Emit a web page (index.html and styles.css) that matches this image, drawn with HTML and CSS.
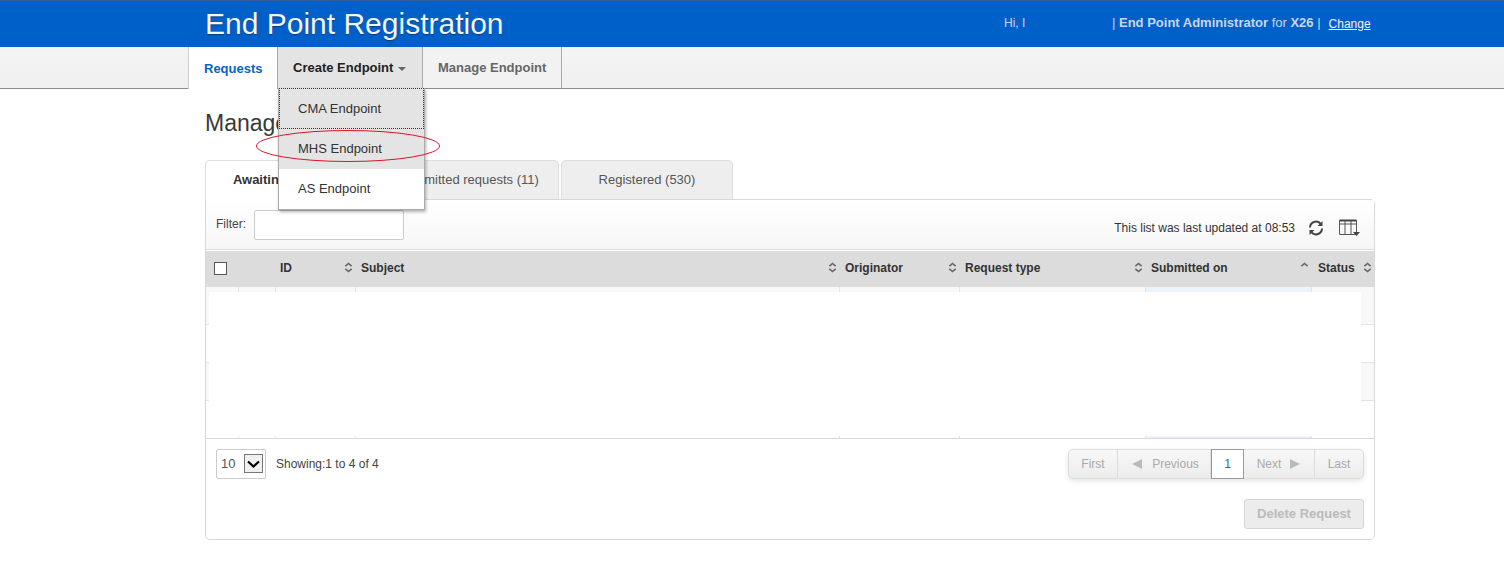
FILE: index.html
```html
<!DOCTYPE html>
<html lang="en">
<head>
    <meta charset="UTF-8">
    <title>End Point Registration</title>
    <link rel="stylesheet" href="styles.css">
</head>
<body>
    <svg class="defs" width="0" height="0">
        <symbol id="sort" viewBox="0 0 10 12">
            <path d="M1.5 4.5 5 1.5l3.500 3M1.500 7.500 5 10.500l3.500-3" fill="none" stroke="#666" stroke-width="1.800"/>
        </symbol>
    </svg>

    <!-- Header -->
    <header class="top-bar">
        <h1>End Point Registration</h1>
        <div class="user-info">
            <span class="greeting">Hi, I</span>
            <span class="role">| <b>End Point Administrator</b> for <b>X26</b> |</span>
            <a href="#">Change</a>
        </div>
    </header>

    <!-- Nav -->
    <nav class="main-nav">
        <a class="nav-item active" href="#">Requests</a>
        <div class="nav-dropdown">
            <a class="nav-item open" href="#">Create Endpoint <i class="caret"></i></a>
            <ul class="dropdown-menu">
                <li class="focused">CMA Endpoint</li>
                <li class="hover">MHS Endpoint</li>
                <li>AS Endpoint</li>
            </ul>
            <svg class="highlight" width="186" height="34" viewBox="0 0 186 34">
                <ellipse cx="93" cy="17" rx="91.500" ry="15.500" fill="none" stroke="#e0142c" stroke-width="1"/>
            </svg>
        </div>
        <a class="nav-item" href="#">Manage Endpoint</a>
    </nav>

    <main class="content">
        <h2>Manage Requests</h2>

        <div class="tabs">
            <a class="tab active" href="#">Awaiting approval (4)</a>
            <a class="tab" href="#">Submitted requests (11)</a>
            <a class="tab" href="#">Registered (530)</a>
        </div>

        <section class="panel">
            <div class="toolbar">
                <label class="filter">Filter: <input type="text"></label>
                <div class="toolbar-right">
                    <span>This list was last updated at 08:53</span>
                    <svg class="refresh" width="16" height="16" viewBox="0 0 16 16">
                        <path d="M2 7.500A6 6 0 0 1 12.500 3.700M14 8.500A6 6 0 0 1 3.500 12.300" fill="none" stroke="#444" stroke-width="2"/>
                        <path d="M14.500 1v5h-5zM1.500 15v-5h5z" fill="#444"/>
                    </svg>
                    <svg class="columns" width="22" height="18" viewBox="0 0 22 18">
                        <path d="M.5 1.500h17v14H.5zM.5 5h17M6 1.500v14M12 1.500v14" fill="none" stroke="#555"/>
                        <path d="M.5 1.500h17" stroke="#444" stroke-width="2"/>
                        <path d="M14 13h7l-3.500 4z" fill="#444"/>
                    </svg>
                </div>
            </div>

            <div class="table-wrap">
                <table>
                    <colgroup>
                        <col class="c-check"><col class="c-flag"><col class="c-id"><col class="c-subject">
                        <col class="c-orig"><col class="c-type"><col class="c-date"><col class="c-status">
                    </colgroup>
                    <thead>
                        <tr>
                            <th><i class="checkbox"></i></th>
                            <th></th>
                            <th class="th-id">ID <svg class="sort"><use href="#sort"/></svg></th>
                            <th>Subject <svg class="sort"><use href="#sort"/></svg></th>
                            <th>Originator <svg class="sort"><use href="#sort"/></svg></th>
                            <th>Request type <svg class="sort"><use href="#sort"/></svg></th>
                            <th>Submitted on
                                <svg class="sort" viewBox="0 0 10 12"><path d="M1.500 4.500 5 1.500l3.500 3" fill="none" stroke="#666" stroke-width="1.800"/></svg>
                            </th>
                            <th class="th-status">Status <svg class="sort"><use href="#sort"/></svg></th>
                        </tr>
                    </thead>
                    <tbody>
                        <tr class="odd"><td></td><td></td><td></td><td></td><td></td><td></td><td class="sorted"></td><td></td></tr>
                        <tr><td></td><td></td><td></td><td></td><td></td><td></td><td class="sorted"></td><td></td></tr>
                        <tr class="odd"><td></td><td></td><td></td><td></td><td></td><td></td><td class="sorted"></td><td></td></tr>
                        <tr><td></td><td></td><td></td><td></td><td></td><td></td><td class="sorted"></td><td></td></tr>
                    </tbody>
                </table>
                <div class="blank-out"></div>
            </div>

            <div class="table-footer">
                <div class="page-size">
                    <span>10</span>
                    <span class="select-btn">
                        <svg width="13" height="8" viewBox="0 0 13 8"><path d="M1 1.500 6.500 6.500 12 1.500" fill="none" stroke="#000" stroke-width="2.200"/></svg>
                    </span>
                </div>
                <span class="showing">Showing:1 to 4 of 4</span>
                <div class="pagination">
                    <a class="pg-first" href="#">First</a>
                    <a class="pg-prev" href="#"><i class="arrow-left"></i>Previous</a>
                    <a class="pg-current" href="#">1</a>
                    <a class="pg-next" href="#">Next<i class="arrow-right"></i></a>
                    <a class="pg-last" href="#">Last</a>
                </div>
            </div>

            <div class="actions">
                <button disabled>Delete Request</button>
            </div>
        </section>
    </main>
</body>
</html>
```

FILE: styles.css
```css
* {
    margin: 0;
    padding: 0;
    box-sizing: border-box;
    font-family: "Liberation Sans", Arial, sans-serif;
}

body {
    background: white;
    color: #333;
    font-size: 12px;
    overflow: hidden;
}

a {
    text-decoration: none;
    color: inherit;
}

.defs {
    position: absolute;
}

/* Header */
.top-bar {
    height: 47px;
    background: #0060c9;
    border-top: 1px solid #2f5f9e;
    padding-left: 205px;
    display: flex;
    align-items: center;
    color: white;
}

.top-bar h1 {
    font-size: 30px;
    font-weight: normal;
    width: 799px;
    text-shadow: 0 1px 1px rgba(0, 0, 0, 0.35);
    color: #f2f5fa;
}

.user-info {
    display: flex;
    align-items: baseline;
    color: #c9d6ea;
    position: relative;
    top: -2px;
}

.greeting {
    width: 108px;
}

.role {
    font-size: 13px;
}

.user-info a {
    color: #f2f5fa;
    text-decoration: underline;
    margin-left: 8px;
    position: relative;
    top: 1px;
}

/* Nav */
.main-nav {
    height: 42px;
    background: linear-gradient(#f4f4f4, #f0f0f0);
    border-bottom: 1px solid #8c8c8c;
    padding-left: 188px;
    display: flex;
}

.nav-item {
    display: flex;
    align-items: center;
    height: 41px;
    padding: 0 15px;
    font-size: 13px;
    font-weight: bold;
    color: #666;
    border-right: 1px solid #aaa;
    background: #f2f2f2;
}

.nav-item.active {
    width: 90px;
    height: 42px;
    background: white;
    color: #0a62c4;
    border-left: 1px solid #ccc;
    border-right: 1px solid #aaa;
}

.nav-item.open {
    width: 145px;
    background: #e4e4e4;
    color: #222;
}

.caret {
    display: inline-block;
    margin-left: 5px;
    margin-top: 2px;
    border-left: 4px solid transparent;
    border-right: 4px solid transparent;
    border-top: 4px solid #666;
}

.nav-dropdown {
    position: relative;
    z-index: 5;
}

.dropdown-menu {
    position: absolute;
    top: 41px;
    left: 0;
    width: 147px;
    list-style: none;
    background: white;
    border: 1px solid #aaa;
    border-top: 0;
    box-shadow: 1px 2px 3px rgba(0, 0, 0, 0.3);
}

.dropdown-menu li {
    height: 40px;
    line-height: 40px;
    padding-left: 19px;
    font-size: 13px;
    color: #333;
}

.dropdown-menu .focused {
    height: 41px;
    line-height: 42px;
    background: #e4e4e4;
    outline: 1px dotted #333;
    outline-offset: -1px;
}

.dropdown-menu .hover {
    background: #e4e4e4;
}

.highlight {
    position: absolute;
    left: -23px;
    top: 82px;
}

/* Content */
.content {
    padding-left: 205px;
    width: 1375px;
}

.content h2 {
    font-size: 23px;
    font-weight: normal;
    line-height: 28px;
    margin-top: 20px;
    color: #3a3a3a;
}

.tabs {
    display: flex;
    margin-top: 23px;
    height: 40px;
    position: relative;
    z-index: 1;
}

.tab {
    display: flex;
    align-items: center;
    justify-content: center;
    height: 39px;
    padding-bottom: 2px;
    font-size: 13px;
    color: #555;
    background: #eee;
    border: 1px solid #ddd;
    border-bottom: 0;
    border-radius: 5px 5px 0 0;
    margin-right: 2px;
}

.tab:nth-child(1) {
    width: 174px;
    padding-left: 13px;
}

.tab:nth-child(2) {
    width: 178px;
}

.tab:nth-child(3) {
    width: 172px;
}

.tab.active {
    height: 40px;
    background: white;
    font-weight: bold;
    color: #333;
    border-bottom: 0;
}

.panel {
    height: 341px;
    margin-top: -1px;
    border: 1px solid #d8d8d8;
    border-radius: 0 5px 5px 5px;
    display: flex;
    flex-direction: column;
}

.toolbar {
    height: 50px;
    background: linear-gradient(white, #f6f6f6);
    border-bottom: 1px solid #ddd;
    display: flex;
    justify-content: space-between;
    padding: 10px 13px 0 10px;
}

.filter {
    display: flex;
    gap: 8px;
    color: #444;
    line-height: 28px;
}

.filter input {
    width: 150px;
    height: 30px;
    border: 1px solid #ccc;
    border-radius: 2px;
    background: white;
}

.toolbar-right {
    display: flex;
    align-items: center;
    height: 36px;
}

.refresh {
    margin-left: 13px;
}

.columns {
    margin-left: 15px;
}

/* Table */
.table-wrap {
    position: relative;
    height: 188px;
    margin-top: 1px;
    border-bottom: 1px solid #d8d8d8;
    border-top: 1px solid #ddd;
}

table {
    width: 1168px;
    table-layout: fixed;
    border-collapse: collapse;
}

.c-check { width: 32px; }
.c-flag { width: 37px; }
.c-id { width: 80px; }
.c-subject { width: 484px; }
.c-orig { width: 120px; }
.c-type { width: 186px; }
.c-date { width: 166px; }
.c-status { width: 63px; }

th {
    height: 35px;
    background: #dcdcdc;
    text-align: left;
    padding: 0 0 4px 6px;
    font-size: 12px;
    color: #333;
    position: relative;
}

th.th-id {
    padding-left: 5px;
}

th.th-status {
    padding-left: 7px;
}

.sort {
    position: absolute;
    width: 9px;
    height: 11px;
    right: 2px;
    top: 10px;
}

.checkbox {
    display: block;
    width: 13px;
    height: 13px;
    margin: 2px 0 0 2px;
    background: white;
    border: 1px solid #555;
}

td {
    height: 38px;
    border-left: 1px solid #e4e4e4;
    border-bottom: 1px solid #e4e4e4;
}

tbody tr:first-child td {
    height: 37px;
}

tbody tr:last-child td {
    border-bottom: 0;
}

td:first-child {
    border-left: 0;
}

.odd td {
    background: #f8f8f8;
}

td.sorted,
.odd td.sorted {
    background: #eef3fb;
}

.blank-out {
    position: absolute;
    left: 3px;
    top: 40px;
    width: 1152px;
    height: 144px;
    background: white;
}

/* Footer */
.table-footer {
    display: flex;
    align-items: center;
    height: 30px;
    margin-top: 10px;
    padding: 0 10px;
}

.page-size {
    width: 50px;
    height: 30px;
    border: 1px solid #ccc;
    border-radius: 2px;
    display: flex;
    align-items: center;
    justify-content: space-between;
    padding: 0 2px 1px 4px;
    font-size: 13px;
    color: #555;
}

.select-btn {
    width: 19px;
    height: 19px;
    background: #f0f0f0;
    border: 1px solid #777;
    display: flex;
    align-items: center;
    justify-content: center;
}

.showing {
    margin-left: 10px;
    color: #444;
}

.pagination {
    margin-left: auto;
    display: flex;
    height: 30px;
    border: 1px solid #ddd;
    border-radius: 5px;
    background: linear-gradient(#f8f8f8, #ececec);
    box-shadow: 0 2px 5px rgba(0, 0, 0, 0.1);
    color: #aaa;
}

.pagination a {
    display: flex;
    align-items: center;
    justify-content: center;
    border-right: 1px solid #ddd;
}

.pg-first { width: 49px; }
.pg-prev { width: 93px; gap: 10px; padding-left: 3px; }
.pg-next { width: 72px; gap: 9px; }
.pg-last { width: 48px; border-right: 0 !important; }

.pagination .pg-current {
    width: 33px;
    height: 30px;
    margin: -1px -1px -1px 0;
    background: white;
    border: 1px solid #999;
    color: #2a5fd8;
    position: relative;
}

.arrow-left {
    border-top: 5px solid transparent;
    border-bottom: 5px solid transparent;
    border-right: 10px solid #bbb;
}

.arrow-right {
    border-top: 5px solid transparent;
    border-bottom: 5px solid transparent;
    border-left: 10px solid #bbb;
}

.actions {
    display: flex;
    justify-content: flex-end;
    margin-top: 20px;
    padding-right: 10px;
}

button {
    width: 120px;
    height: 30px;
    padding-bottom: 2px;
    font-size: 13px;
    font-weight: bold;
    color: #bbb;
    background: #ececec;
    border: 1px solid #d5d5d5;
    border-radius: 3px;
}
```
